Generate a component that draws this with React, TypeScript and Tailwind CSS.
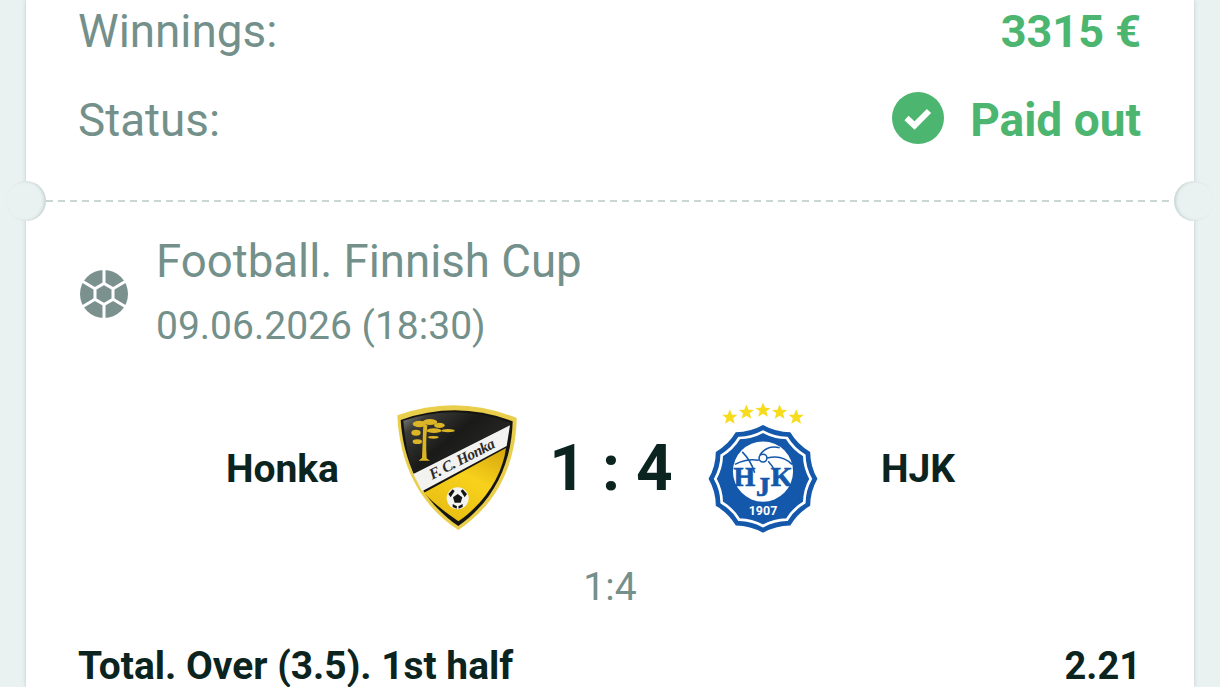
const font = { fontFamily: 'Roboto, sans-serif' };

function Ball() {
  return (
    <svg width="48" height="48" viewBox="0 0 48 48" className="shrink-0">
      <circle cx="24" cy="24" r="24" fill="#7a918e" />
      <g stroke="#fff" strokeWidth="3" fill="none">
        <path d="M24 13.5 L33 18.7 V29.3 L24 34.5 L15 29.3 V18.7 Z" />
        <path d="M24 13.5 V0 M33 18.7 L46 11 M33 29.3 L46 37 M24 34.5 V48 M15 29.3 L2 37 M15 18.7 L2 11" />
      </g>
    </svg>
  );
}

function Check() {
  return (
    <svg width="52" height="52" viewBox="0 0 52 52" className="shrink-0">
      <circle cx="26" cy="26" r="26" fill="#4cb56f" />
      <path d="M14.5 26 L22.5 33.5 L37 19" fill="none" stroke="#fff" strokeWidth="6" />
    </svg>
  );
}

function Honka() {
  return (
    <svg width="150" height="150" viewBox="0 0 450 450" className="shrink-0">
      <defs>
        <linearGradient id="hk-dark" x1="0" y1="0" x2="1" y2="0.7">
          <stop offset="0" stopColor="#8d8d88" />
          <stop offset="0.18" stopColor="#3a3a37" />
          <stop offset="0.5" stopColor="#1a1a18" />
          <stop offset="1" stopColor="#2c2c2a" />
        </linearGradient>
        <linearGradient id="hk-yellow" x1="0.9" y1="0" x2="0.3" y2="1">
          <stop offset="0" stopColor="#d8a80e" />
          <stop offset="0.45" stopColor="#f7d21c" />
          <stop offset="1" stopColor="#e8bd12" />
        </linearGradient>
      </defs>
      <path d="M52 76 Q230 12 410 84 C408 220 352 342 235 420 C118 345 58 220 52 76 Z" fill="#e9ce4c" />
      <path d="M62 90 Q230 30 398 94 C395 220 342 332 235 408 C128 336 70 220 62 90 Z" fill="#141412" />
      <path d="M70 92 Q230 38 390 98 L388 106 L100 250 Q76 175 70 92 Z" fill="url(#hk-dark)" />
      <path d="M390 106 L380 168 L126 304 L100 252 Z" fill="#f2f2f0" />
      <path d="M378 174 C368 250 320 335 235 394 C190 362 155 335 132 308 Z" fill="url(#hk-yellow)" />
      <g fill="#dcb526">
        <path d="M130 105 L142 105 C138 140 138 175 140 205 L150 212 L116 212 L126 203 C128 170 128 135 130 105 Z" />
        <ellipse cx="118" cy="102" rx="20" ry="10" />
        <ellipse cx="150" cy="96" rx="22" ry="9" />
        <ellipse cx="178" cy="106" rx="16" ry="8" />
        <ellipse cx="162" cy="122" rx="22" ry="7" />
        <ellipse cx="204" cy="122" rx="20" ry="5" />
        <ellipse cx="108" cy="128" rx="14" ry="9" />
        <ellipse cx="112" cy="155" rx="14" ry="7" />
        <ellipse cx="160" cy="142" rx="16" ry="4" />
      </g>
      <text
        x="245"
        y="222"
        transform="rotate(-27 245 205)"
        textAnchor="middle"
        textLength={215}
        fill="#2b2b29"
        fontSize="46"
        fontStyle="italic"
        fontWeight="700"
        fontFamily="Liberation Serif, serif"
      >
        F. C. Honka
      </text>
      <circle cx="233" cy="325" r="33" fill="#f3f3f1" />
      <path d="M233 312 L247 322 L242 338 H224 L219 322 Z" fill="#161616" />
      <path d="M205 312 L218 298 L224 303 L212 322 Z M261 312 L248 298 L242 303 L254 322 Z M218 351 L230 356 L231 349 L218 342 Z M248 351 L236 356 L235 349 L248 342 Z" fill="#161616" />
    </svg>
  );
}

function Star({ x, y }: { x: number; y: number }) {
  return (
    <path
      transform={`translate(${x} ${y})`}
      d="M0 -7.6 L2.1 -2.5 L7.4 -2.3 L3.2 1 L4.7 6.3 L0 3.3 L-4.7 6.3 L-3.2 1 L-7.4 -2.3 L-2.1 -2.5 Z"
      fill="#f7dc1e"
    />
  );
}

function scallopPath(cx: number, cy: number, rx: number, ry: number, n: number) {
  let d = '';
  for (let i = 0; i < n; i++) {
    const a0 = -Math.PI / 2 + (i * 2 * Math.PI) / n;
    const a1 = -Math.PI / 2 + ((i + 1) * 2 * Math.PI) / n;
    const m = (a0 + a1) / 2;
    const p0 = [cx + rx * Math.cos(a0), cy + ry * Math.sin(a0)];
    const p1 = [cx + rx * Math.cos(a1), cy + ry * Math.sin(a1)];
    const c = [cx + rx * 0.9 * Math.cos(m), cy + ry * 0.9 * Math.sin(m)];
    if (i === 0) d += `M${p0[0].toFixed(1)} ${p0[1].toFixed(1)}`;
    d += ` Q${c[0].toFixed(1)} ${c[1].toFixed(1)} ${p1[0].toFixed(1)} ${p1[1].toFixed(1)}`;
  }
  return d + ' Z';
}

function HjkLetter({ x, y, c }: { x: number; y: number; c: string }) {
  return (
    <text
      x={x}
      y={y}
      textAnchor="middle"
      fill="#1458ab"
      stroke="#1458ab"
      strokeWidth="0.7"
      fontSize="27"
      fontWeight="700"
      fontFamily="Liberation Serif, serif"
    >
      {c}
    </text>
  );
}

function Hjk() {
  return (
    <svg width="112" height="138" viewBox="0 -6 108 133" className="shrink-0">
      <Star x={22} y={10.6} />
      <Star x={38} y={5.8} />
      <Star x={54} y={3.9} />
      <Star x={70} y={5.8} />
      <Star x={86} y={10.6} />
      <path d={scallopPath(54, 70, 52.5, 52, 12)} fill="#1458ab" />
      <path d={scallopPath(54, 70, 46, 45.5, 12)} fill="none" stroke="#fff" strokeWidth="2.6" />
      <circle cx="54" cy="63" r="29" fill="#fff" />
      <g fill="none" stroke="#1458ab" strokeWidth="1.5">
        <path d="M27 56 Q38 50 50 52 M51 47 Q58 37 70 40 M58 50 Q72 46 82 56 M34 44 Q42 52 46 64 M59 53 Q64 58 66 64" />
        <circle cx="54" cy="50" r="3.8" />
      </g>
      <HjkLetter x={36} y={77} c="H" />
      <HjkLetter x={54} y={87} c="J" />
      <HjkLetter x={72} y={77} c="K" />
      <text x="54" y="105" textAnchor="middle" fill="#fff" fontSize="12" fontWeight="700" fontFamily="Roboto, sans-serif">
        1907
      </text>
    </svg>
  );
}

function Notch({ side }: { side: 'left' | 'right' }) {
  return (
    <div
      className={
        side === 'left'
          ? 'absolute left-[-20px] top-[181px] h-[40px] w-[40px] rounded-full bg-[#e9f2f1] shadow-[inset_-2px_0_3px_rgba(120,140,135,0.28)]'
          : 'absolute right-[-20px] top-[181px] h-[40px] w-[40px] rounded-full bg-[#e9f2f1] shadow-[inset_2px_0_3px_rgba(120,140,135,0.28)]'
      }
    />
  );
}

export default function App() {
  return (
    <div className="h-[687px] w-[1220px] overflow-hidden bg-[#e9f2f1] px-[26px]" style={font}>
      <div className="relative h-[687px] bg-white px-[53px] shadow-[0_0_4px_rgba(110,130,125,0.35)]">
        <Notch side="left" />
        <Notch side="right" />
        <div className="flex h-[200px] flex-col">
          <div className="flex h-[64px] items-center justify-between">
            <span className="ml-[-1px] mt-[1px] text-[45.8px] text-[#74908b]">Winnings:</span>
            <span className="text-[45px] font-bold text-[#4cb56f]">3315 €</span>
          </div>
          <div className="mt-[24px] flex h-[64px] items-center justify-between">
            <span className="ml-[-1px] mt-[1px] text-[45.8px] leading-[64px] text-[#74908b]">Status:</span>
            <div className="flex items-center gap-[26px]">
              <div className="mt-[-4px]"><Check /></div>
              <span className="text-[46px] font-bold leading-[64px] text-[#4cb56f]">Paid out</span>
            </div>
          </div>
        </div>
        <div className="mx-[-33px] h-[2px] bg-[repeating-linear-gradient(90deg,#c9d6d3_0,#c9d6d3_7px,transparent_7px,transparent_12px)]" />
        <div className="ml-[1px] flex items-center gap-[28px] pt-[29px]">
          <Ball />
          <div className="flex flex-col">
            <span className="mt-[1px] text-[45.6px] leading-[60px] text-[#74908b]">Football. Finnish Cup</span>
            <span className="mt-[4px] text-[39px] leading-[60px] text-[#74908b]">09.06.2026 (18:30)</span>
          </div>
        </div>
        <div className="mt-[48px] flex h-[130px] items-center">
          <span className="w-[260px] text-right text-[39px] font-bold text-[#0c2420]">Honka</span>
          <div className="ml-[41px] mt-[-9px]"><Honka /></div>
          <span className="w-[162px] text-center text-[64px] font-bold text-[#0c2420]">1 : 4</span>
          <div className="ml-[15px]"><Hjk /></div>
          <span className="ml-[62px] text-[39px] font-bold text-[#0c2420]">HJK</span>
        </div>
        <div className="mt-[28px] text-center text-[39px] leading-[50px] text-[#74908b]">1:4</div>
        <div className="mt-[33px] flex items-center justify-between text-[38.9px] font-bold leading-[42px] text-[#0c2420]">
          <span className="ml-[-1px]">Total. Over (3.5). 1st half</span>
          <span className="text-[38px]">2.21</span>
        </div>
      </div>
    </div>
  );
}
